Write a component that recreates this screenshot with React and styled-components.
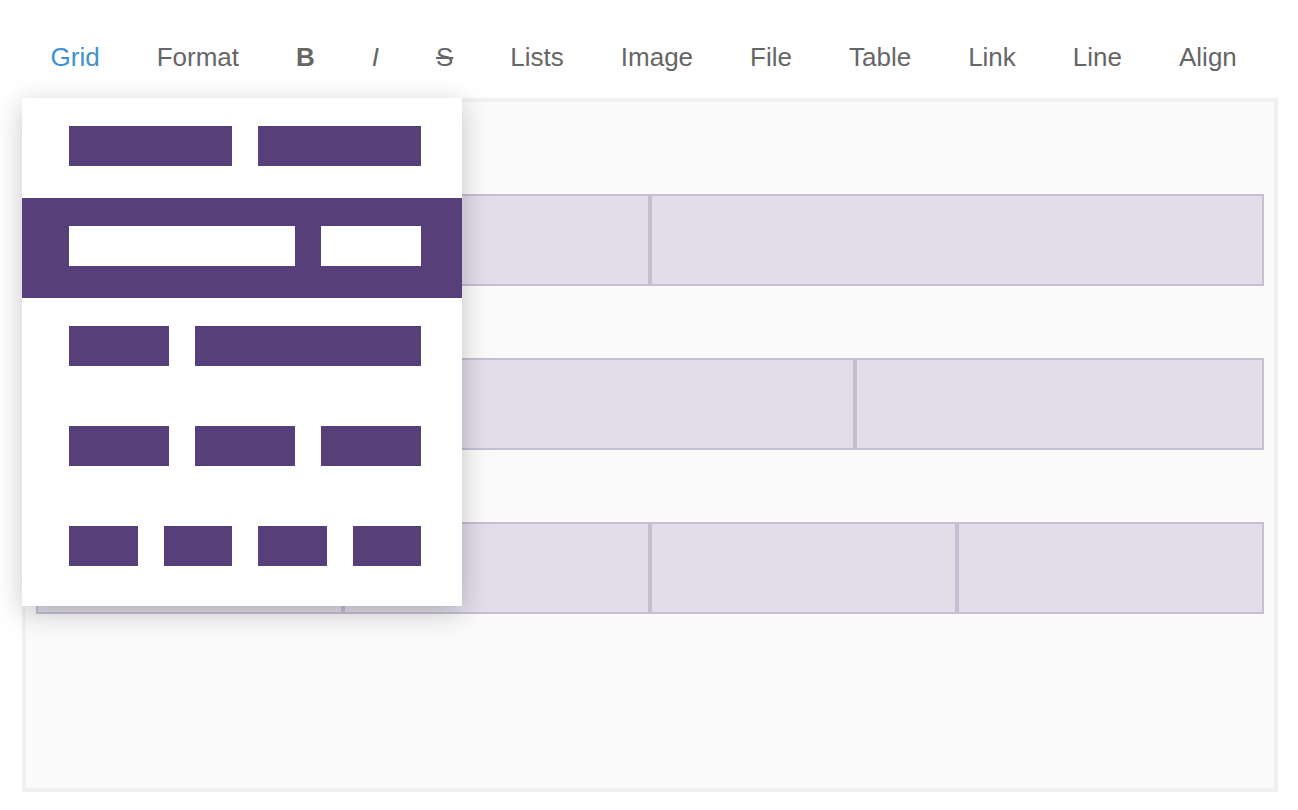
import React from 'react'
import styled, { createGlobalStyle } from 'styled-components'

const purple = '#573f7a'

const GlobalStyle = createGlobalStyle`
  html, body {
    margin: 0;
    padding: 0;
    background: #fff;
    font-family: 'Liberation Sans', Arial, sans-serif;
  }
`

const Page = styled.div`
  position: relative;
  width: 1298px;
  height: 810px;
  overflow: hidden;
`

const Toolbar = styled.div`
  display: flex;
  align-items: center;
  box-sizing: border-box;
  height: 98px;
  padding: 42px 0 26px 22px;
`

const ToolButton = styled.span`
  padding: 0 28.5px;
  font-size: 26px;
  line-height: 30px;
  color: ${(p) => (p.$active ? '#3d92d0' : '#666')};
  font-weight: ${(p) => (p.$bold ? 'bold' : 'normal')};
  font-style: ${(p) => (p.$italic ? 'italic' : 'normal')};
  text-decoration: ${(p) => (p.$strike ? 'line-through' : 'none')};
  white-space: nowrap;
  cursor: pointer;
`

const Editor = styled.div`
  box-sizing: border-box;
  margin-left: 22px;
  width: 1256px;
  height: 694px;
  border: 4px solid #f0f0f0;
  background: #fafafa;
  padding: 92px 10px 0;
  display: flex;
  flex-direction: column;
  gap: 72px;
`

const GridRow = styled.div`
  display: flex;
  height: 92px;
`

const Cell = styled.div`
  box-sizing: border-box;
  width: ${(p) => p.$pct}%;
  border: 2px solid #c6bfd4;
  background: #e1dde9;
`

const Dropdown = styled.div`
  position: absolute;
  top: 98px;
  left: 22px;
  width: 440px;
  padding-bottom: 8px;
  background: #fff;
  box-shadow: 0 6px 26px rgba(0, 0, 0, 0.22);
`

const Option = styled.div`
  box-sizing: border-box;
  height: 100px;
  padding: 28px 0 0 34px;
  background: ${(p) => (p.$selected ? purple : '#fff')};
  cursor: pointer;
`

const Columns = styled.div`
  display: flex;
  width: 378px;
`

const Column = styled.div`
  box-sizing: border-box;
  padding: 0 13px;
  width: ${(p) => p.$pct}%;
`

const Bar = styled.div`
  height: 40px;
  background: ${(p) => (p.$selected ? '#fff' : purple)};
`

const tools = [
  { label: 'Grid', active: true },
  { label: 'Format' },
  { label: 'B', bold: true },
  { label: 'I', italic: true },
  { label: 'S', strike: true },
  { label: 'Lists' },
  { label: 'Image' },
  { label: 'File' },
  { label: 'Table' },
  { label: 'Link' },
  { label: 'Line' },
  { label: 'Align' },
]

const layouts = [
  [1, 1],
  [2, 1],
  [1, 2],
  [1, 1, 1],
  [1, 1, 1, 1],
]

const rows = [
  [1, 1],
  [2, 1],
  [1, 1, 1, 1],
]

const pct = (cols, c) => (c / cols.reduce((a, b) => a + b, 0)) * 100

export default function App() {
  const selected = 1
  return (
    <Page>
      <GlobalStyle />
      <Toolbar>
        {tools.map((t) => (
          <ToolButton
            key={t.label}
            $active={t.active}
            $bold={t.bold}
            $italic={t.italic}
            $strike={t.strike}
          >
            {t.label}
          </ToolButton>
        ))}
      </Toolbar>
      <Editor>
        {rows.map((r, i) => (
          <GridRow key={i}>
            {r.map((span, j) => (
              <Cell key={j} $pct={pct(r, span)} />
            ))}
          </GridRow>
        ))}
      </Editor>
      <Dropdown>
        {layouts.map((cols, i) => (
          <Option key={i} $selected={i === selected}>
            <Columns>
              {cols.map((c, j) => (
                <Column key={j} $pct={pct(cols, c)}>
                  <Bar $selected={i === selected} />
                </Column>
              ))}
            </Columns>
          </Option>
        ))}
      </Dropdown>
    </Page>
  )
}
